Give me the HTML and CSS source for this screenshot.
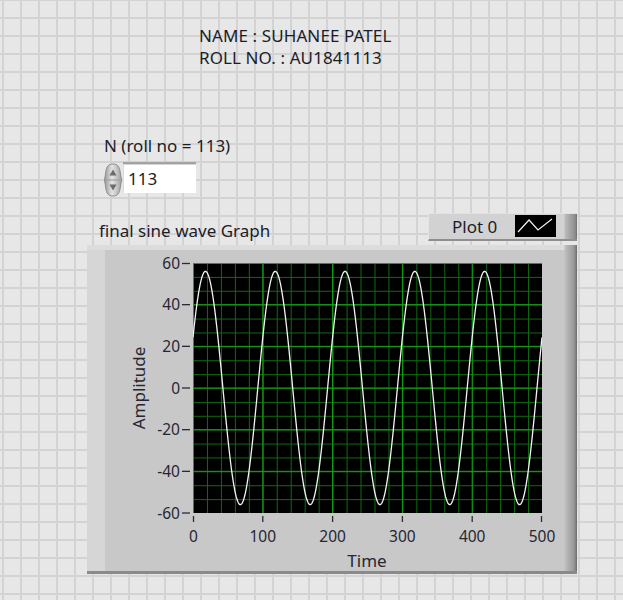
FILE: index.html
```html
<!DOCTYPE html>
<html>
<head>
<meta charset="utf-8">
<title>final sine wave</title>
<link rel="stylesheet" href="styles.css">
</head>
<body>
<div class="panel">
  <div class="ident">
    <div>NAME : SUHANEE PATEL</div>
    <div>ROLL NO. : AU1841113</div>
  </div>

  <div class="control">
    <div class="ctl-label">N (roll no = 113)</div>
    <div class="numeric">
      <svg class="spinner" width="20" height="34" viewBox="0 0 20 34">
        <defs>
          <linearGradient id="sg" x1="0" x2="1" y1="0" y2="0">
            <stop offset="0" stop-color="#9a9a9a"/>
            <stop offset="0.45" stop-color="#e4e4e4"/>
            <stop offset="1" stop-color="#a2a2a2"/>
          </linearGradient>
        </defs>
        <path d="M10 1 C14.5 1 16.5 4 17 8 L18.5 17 L17 26 C16.5 30 14.5 33 10 33 C5.5 33 3.5 30 3 26 L1.5 17 L3 8 C3.5 4 5.5 1 10 1 Z" fill="url(#sg)" stroke="#8c8c8c" stroke-width="1"/>
        <line x1="3" y1="17" x2="17" y2="17" stroke="#9a9a9a" stroke-width="1"/>
        <path d="M6.5 12.5 L10 6.5 L13.5 12.5 Z" fill="#6b6b6b"/>
        <path d="M6.5 21.5 L10 27.5 L13.5 21.5 Z" fill="#6b6b6b"/>
      </svg>
      <div class="numbox">113</div>
    </div>
  </div>

  <div class="graph">
    <div class="graph-head">
      <div class="graph-label">final sine wave Graph</div>
      <div class="legend">
        <span class="legend-text">Plot 0</span>
        <svg class="swatch" width="41" height="22" viewBox="0 0 41 22">
          <rect x="0" y="0" width="41" height="22" fill="#000"/>
          <polyline points="3,17 14,5 23,15 37,4" fill="none" stroke="#f2f2f2" stroke-width="1.2"/>
        </svg>
      </div>
    </div>

    <div class="frame">
      <svg class="plot" width="490" height="326" viewBox="0 0 490 326">
        <defs>
          <pattern id="minor" x="106" y="18" width="13.96" height="13.8889" patternUnits="userSpaceOnUse">
            <rect x="0" y="0" width="1" height="13.8889" fill="#0f6a0f"/>
            <rect x="0" y="0" width="13.96" height="1" fill="#0f6a0f"/>
          </pattern>
          <clipPath id="plotclip">
            <rect x="106" y="18" width="349" height="250"/>
          </clipPath>
        </defs>
        <rect x="106" y="18" width="349" height="250" fill="#000"/>
        <rect x="106" y="18" width="349" height="250" fill="url(#minor)"/>
        <g stroke="#17a317" stroke-width="1">
          <line x1="106.5" y1="18" x2="106.5" y2="268"/>
          <line x1="175.8" y1="18" x2="175.8" y2="268"/>
          <line x1="245.6" y1="18" x2="245.6" y2="268"/>
          <line x1="315.4" y1="18" x2="315.4" y2="268"/>
          <line x1="385.2" y1="18" x2="385.2" y2="268"/>
          <line x1="106" y1="18.5" x2="455" y2="18.5"/>
          <line x1="106" y1="59.67" x2="455" y2="59.67"/>
          <line x1="106" y1="101.33" x2="455" y2="101.33"/>
          <line x1="106" y1="143" x2="455" y2="143"/>
          <line x1="106" y1="184.67" x2="455" y2="184.67"/>
          <line x1="106" y1="226.33" x2="455" y2="226.33"/>
        </g>
        <polyline id="wave" clip-path="url(#plotclip)" fill="none" stroke="#f4f4f4" stroke-width="1.3" stroke-linejoin="round" points=""/>

        <g class="ticks" stroke="#2b2b36" stroke-width="1.3">
          <line x1="95" y1="18.5" x2="103" y2="18.5"/>
          <line x1="95" y1="59.67" x2="103" y2="59.67"/>
          <line x1="95" y1="101.33" x2="103" y2="101.33"/>
          <line x1="95" y1="143" x2="103" y2="143"/>
          <line x1="95" y1="184.67" x2="103" y2="184.67"/>
          <line x1="95" y1="226.33" x2="103" y2="226.33"/>
          <line x1="95" y1="268" x2="103" y2="268"/>
          <line x1="106.5" y1="271" x2="106.5" y2="277"/>
          <line x1="175.8" y1="271" x2="175.8" y2="277"/>
          <line x1="245.6" y1="271" x2="245.6" y2="277"/>
          <line x1="315.4" y1="271" x2="315.4" y2="277"/>
          <line x1="385.2" y1="271" x2="385.2" y2="277"/>
          <line x1="454.5" y1="271" x2="454.5" y2="277"/>
        </g>
        <g class="ylabels" text-anchor="end">
          <text x="93" y="24">60</text>
          <text x="93" y="65.2">40</text>
          <text x="93" y="106.8">20</text>
          <text x="93" y="148.5">0</text>
          <text x="93" y="190.2">-20</text>
          <text x="93" y="231.8">-40</text>
          <text x="93" y="273.5">-60</text>
        </g>
        <g class="xlabels" text-anchor="middle">
          <text x="106.5" y="297">0</text>
          <text x="175.8" y="297">100</text>
          <text x="245.6" y="297">200</text>
          <text x="315.4" y="297">300</text>
          <text x="385.2" y="297">400</text>
          <text x="455" y="297">500</text>
        </g>
        <text class="axis-title" x="280" y="321.5" text-anchor="middle">Time</text>
        <text class="axis-title" text-anchor="middle" transform="translate(58,143) rotate(-90)">Amplitude</text>
      </svg>
    </div>
  </div>
</div>
<script src="script.js"></script>
</body>
</html>
```

FILE: styles.css
```css
html, body {
  margin: 0;
  padding: 0;
}

body {
  width: 623px;
  height: 600px;
  overflow: hidden;
  background-color: #e7e7e7;
  background-image:
    linear-gradient(to right, #d3d3d3 0, #d3d3d3 2px, transparent 2px),
    linear-gradient(to bottom, #d3d3d3 0, #d3d3d3 2px, transparent 2px);
  background-size: 18px 18px;
  background-position: 2px 17px;
  font-family: "Noto Sans", "DejaVu Sans", sans-serif;
  color: #1c1c28;
}

.panel {
  display: flex;
  flex-direction: column;
  align-items: flex-start;
}

.ident {
  margin-left: 199px;
  padding-top: 25px;
  font-size: 17px;
  line-height: 22px;
  letter-spacing: 0.1px;
}

.control {
  margin-left: 103px;
  margin-top: 66px;
  display: flex;
  flex-direction: column;
}

.ctl-label {
  font-size: 17px;
  line-height: 22px;
  padding-left: 1px;
}

.numeric {
  display: flex;
  align-items: flex-start;
  margin-top: 5px;
}

.spinner {
  display: block;
  margin-top: 1px;
}

.numbox {
  width: 68px;
  height: 29px;
  padding-left: 5px;
  background: #ffffff;
  border-top: 2px solid #a3a3a3;
  box-shadow: inset 0 1px 0 #d4d4d4, inset 1px 0 0 #dcdcdc;
  font-size: 17px;
  line-height: 29px;
  color: #1c1c28;
}

.graph {
  margin-left: 87px;
  margin-top: 16px;
  width: 490px;
}

.graph-head {
  display: flex;
  justify-content: space-between;
  align-items: flex-end;
  height: 28px;
}

.graph-label {
  padding-left: 12px;
  font-size: 17px;
  line-height: 22px;
  margin-bottom: -1px;
}

.legend {
  width: 149px;
  height: 28px;
  box-sizing: border-box;
  display: flex;
  align-items: flex-start;
  background:
    linear-gradient(to right, rgba(0,0,0,0) 0, rgba(0,0,0,0) calc(100% - 13px), #bcbcbc calc(100% - 12px), #8e8e8e calc(100% - 2px), #6f6f6f 100%),
    #d2d2d2;
  border-left: 1px solid #e4e4e4;
  border-top: 1px solid #e2e2e2;
  border-bottom: 2px solid #8f8f8f;
}

.legend-text {
  margin-left: 23px;
  font-size: 17px;
  line-height: 25px;
}

.swatch {
  display: block;
  margin-left: auto;
  margin-right: 21px;
  margin-top: 1px;
}

.frame {
  margin-top: 4px;
  width: 490px;
  height: 329px;
  box-sizing: border-box;
  border-bottom: 3px solid #8a8a8a;
  background:
    linear-gradient(to right, rgba(0,0,0,0) 0, rgba(0,0,0,0) calc(100% - 13px), #bfbfbf calc(100% - 12px), #979797 calc(100% - 3px), #6c6c6c 100%),
    linear-gradient(to bottom, #dcdcdc 0, #dcdcdc 5px, rgba(0,0,0,0) 5px),
    linear-gradient(to right, #d6d6d6 0, #d6d6d6 18px, #c8c8c8 18px);
}

.plot {
  display: block;
  overflow: visible;
}

.plot text {
  font-family: "Noto Sans", "DejaVu Sans", sans-serif;
  fill: #262634;
}

.ylabels text,
.xlabels text {
  font-size: 15.5px;
}

.axis-title {
  font-size: 17px;
}
```

FILE: script.js
```js
(function () {
  var pts = [];
  for (var x = 0; x <= 500; x++) {
    var v = 56 * Math.sin(2 * Math.PI * x / 100 + 0.45);
    var px = 106 + x * 349 / 500;
    var py = 18 + (60 - v) * 250 / 120;
    pts.push(px.toFixed(2) + "," + py.toFixed(2));
  }
  document.getElementById("wave").setAttribute("points", pts.join(" "));
})();
```
